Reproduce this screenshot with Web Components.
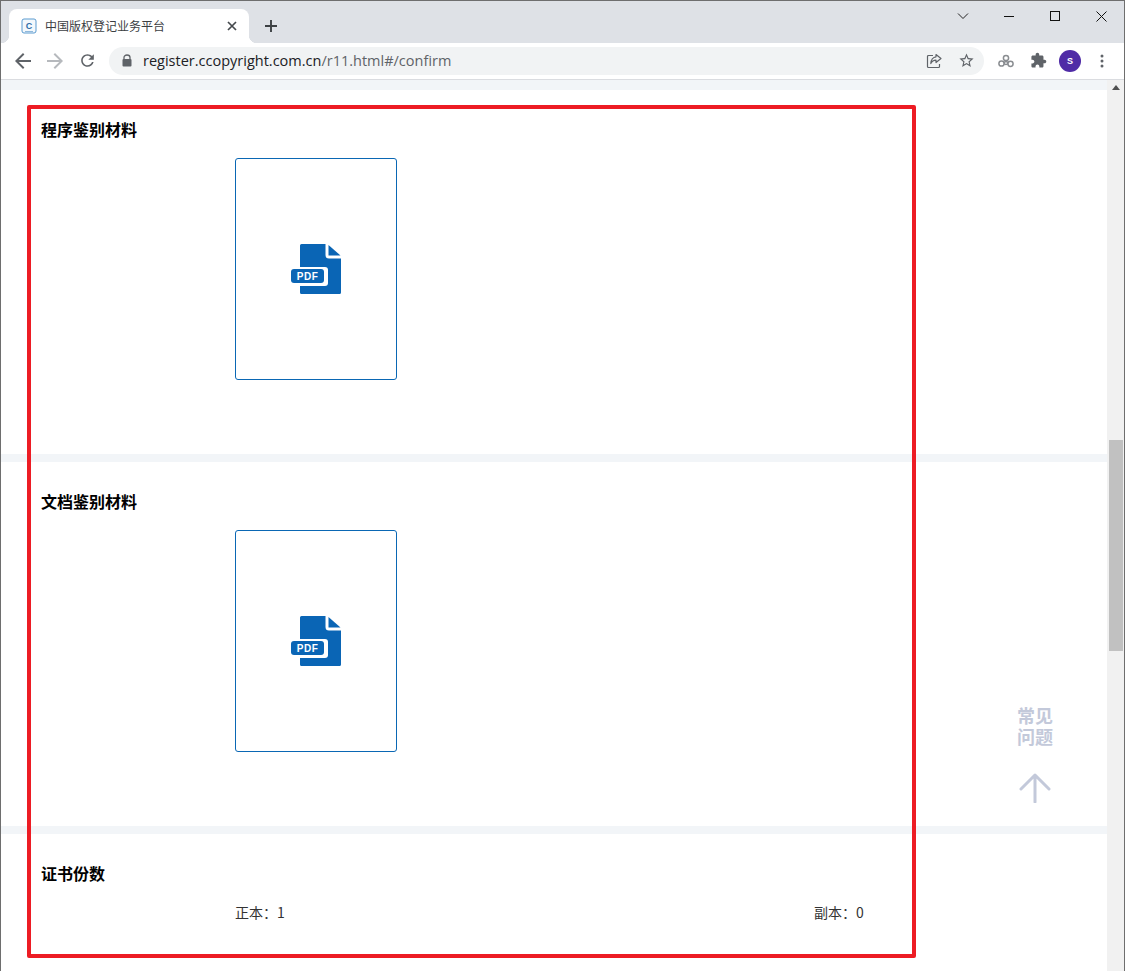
<!DOCTYPE html>
<html lang="zh">
<head>
<meta charset="utf-8">
<title>中国版权登记业务平台</title>
<style>
html,body{margin:0;padding:0;background:#fff;overflow:hidden}
body{font-family:"Noto Sans CJK SC","Noto Sans",sans-serif}
</style>
</head>
<body>
<x-window>
  <x-tabstrip slot="top"></x-tabstrip>
  <x-toolbar slot="top"></x-toolbar>
  <x-section heading="程序鉴别材料"><x-pdf-card></x-pdf-card></x-section>
  <x-section heading="文档鉴别材料"><x-pdf-card></x-pdf-card></x-section>
  <x-section heading="证书份数" last>
    <x-copies></x-copies>
  </x-section>
</x-window>
<script>
function def(name, html, extra){
  const t=document.createElement('template');t.innerHTML=html;
  customElements.define(name,class extends HTMLElement{
    constructor(){super();this.attachShadow({mode:'open'}).appendChild(t.content.cloneNode(true));}
    connectedCallback(){extra&&extra.call(this);}
  });
}
const svg=(w,h,vb,body,attrs='')=>`<svg width="${w}" height="${h}" viewBox="${vb}" ${attrs}>${body}</svg>`;

def('x-window',`<style>
:host{display:flex;flex-direction:column;box-sizing:border-box;width:1125px;height:971px;border:1px solid #6e6e6e;border-bottom:0;overflow:hidden}
.page{flex:1;display:flex;min-height:0}
.content{flex:1;position:relative;min-width:0;display:flex;flex-direction:column;padding-top:10px;background:#fff}
.content::before{content:"";position:absolute;left:0;right:0;top:0;height:10px;background:#f2f5f8}
</style>
<slot name="top"></slot>
<div class="page">
  <div class="content"><slot></slot><x-float-help></x-float-help><x-annotation></x-annotation></div>
  <x-scrollbar></x-scrollbar>
</div>`);

def('x-tabstrip',`<style>
:host{display:flex;height:42px;background:#dee1e6;padding:8px 0 0 8px;box-sizing:border-box;position:relative}
.tab{width:240px;height:34px;background:#fff;border-radius:8px 8px 0 0;display:flex;align-items:center;padding:0 9px 0 12px;box-sizing:border-box;position:relative;font:12px/16px "Noto Sans CJK SC",sans-serif;color:#3c4043}
.tab::before,.tab::after{content:"";position:absolute;bottom:0;width:8px;height:8px}
.tab::before{left:-8px;background:radial-gradient(circle at 0 0,transparent 8px,#fff 8.5px)}
.tab::after{right:-8px;background:radial-gradient(circle at 100% 0,transparent 8px,#fff 8.5px)}
.fav{width:16px;height:16px;margin-right:8px;flex:none}
.name{flex:1;white-space:nowrap}
.x{flex:none;display:flex}
.new{margin:3px 0 0 8px;width:28px;height:28px;display:flex;align-items:center;justify-content:center}
.sp{flex:1}
.ctl{width:46px;height:30px;margin-top:-8px;display:flex;align-items:center;justify-content:center}
</style>
<div class="tab">
  ${svg(16,16,'0 0 16 16','<rect x="1" y="1" width="14" height="14" rx="2" fill="#f3f8fc" stroke="#5b9bd0"/><text x="8" y="11" text-anchor="middle" font-family="Liberation Sans" font-weight="700" font-size="9" fill="#2c6da8">C</text><rect x="4" y="13" width="8" height="1" fill="#8fb9dc"/>','class="fav"')}
  <span class="name">中国版权登记业务平台</span>
  <span class="x">${svg(16,16,'0 0 16 16','<path d="M4 4l8 8M12 4l-8 8" stroke="#45494d" stroke-width="1.7" fill="none"/>')}</span>
</div>
<div class="new">${svg(14,14,'0 0 14 14','<path d="M7 1v12M1 7h12" stroke="#3c4043" stroke-width="1.9" fill="none"/>')}</div>
<div class="sp"></div>
<div class="ctl">${svg(12,8,'0 0 12 8','<path d="M1 1.5l5 5 5-5" stroke="#222" stroke-width="1" fill="none"/>')}</div>
<div class="ctl">${svg(10,10,'0 0 10 10','<path d="M0 5.5h10" stroke="#111" stroke-width="1" fill="none"/>')}</div>
<div class="ctl">${svg(10,10,'0 0 10 10','<rect x=".5" y=".5" width="9" height="9" stroke="#111" fill="none"/>')}</div>
<div class="ctl">${svg(11,11,'0 0 11 11','<path d="M.5.5l10 10M10.5.5l-10 10" stroke="#111" stroke-width="1" fill="none"/>')}</div>`);

const btn=s=>`<div class="b">${s}</div>`;
def('x-toolbar',`<style>
:host{display:flex;align-items:center;height:37px;box-sizing:border-box;background:#fff;border-bottom:1px solid #dadce0;padding:0 6px 1px 6px}
.b{width:32px;height:32px;display:flex;align-items:center;justify-content:center;flex:none}
.omni{flex:1;height:28px;margin:0 6px;border-radius:14px;background:#f1f3f4;display:flex;align-items:center;padding:0 2px 0 12px;min-width:0}
.lock{display:flex;margin-right:10px}
.url{flex:1;font:14.5px/20px "Open Sans","Noto Sans",sans-serif;color:#5f6368;white-space:nowrap}
.url b{font-weight:400;color:#202124}
.av{width:22px;height:22px;border-radius:50%;background:#4f2ba6;color:#fff;font:700 9px/22px "Liberation Sans",sans-serif;text-align:center}
.omni .b{width:32px}
</style>
${btn(svg(16,16,'0 0 16 16','<path d="M16 7H3.8l5.6-5.6L8 0 0 8l8 8 1.4-1.4L3.8 9H16z" fill="#5f6368"/>'))}
${btn(svg(16,16,'0 0 16 16','<path d="M0 7h12.2L6.6 1.4 8 0l8 8-8 8-1.4-1.4L12.2 9H0z" fill="#b6b9bd"/>'))}
${btn(svg(19,19,'0 0 24 24','<path d="M17.65 6.35C16.2 4.9 14.21 4 12 4c-4.42 0-7.99 3.58-7.99 8s3.57 8 7.99 8c3.73 0 6.84-2.55 7.73-6h-2.08c-.82 2.33-3.04 4-5.65 4-3.31 0-6-2.69-6-6s2.69-6 6-6c1.66 0 3.14.69 4.22 1.78L13 11h7V4l-2.35 2.35z" fill="#5f6368"/>'))}
<div class="omni">
  <span class="lock">${svg(12,13,'0 0 12 13','<path d="M3 5.5V3.6C3 2 4.3 1 6 1s3 1 3 2.6v1.9" stroke="#5f6368" stroke-width="1.3" fill="none"/><rect x="1.5" y="5" width="9" height="7.5" rx="1" fill="#5f6368"/>')}</span>
  <span class="url"><b>register.ccopyright.com.cn</b>/r11.html#/confirm</span>
  ${btn(svg(16,16,'0 0 16 16','<path d="M7 2.5H2.5a1 1 0 0 0-1 1v10a1 1 0 0 0 1 1h10a1 1 0 0 0 1-1V11" stroke="#5f6368" stroke-width="1.2" fill="none"/><path d="M10 1.5l5 4-5 4V7.2C7.5 7.2 6 8 4.8 10.5 5 7 7 4 10 3.8z" stroke="#5f6368" stroke-width="1.2" fill="none" stroke-linejoin="round"/>'))}
  ${btn(svg(17,17,'0 0 24 24','<path d="M22 9.24l-7.19-.62L12 2 9.19 8.63 2 9.24l5.46 4.73L5.82 21 12 17.27 18.18 21l-1.63-7.03L22 9.24zM12 15.4l-3.76 2.27 1-4.28-3.32-2.88 4.38-.38L12 6.1l1.71 4.04 4.38.38-3.32 2.88 1 4.28L12 15.4z" fill="#5f6368"/>'))}
</div>
${btn(svg(16,14,'0 0 16 14','<g fill="none" stroke="#8a8d91" stroke-width="1.5"><circle cx="3.5" cy="9.5" r="2.6"/><circle cx="12.5" cy="9.8" r="2.6"/><circle cx="8" cy="4" r="2.6"/><circle cx="8" cy="9" r="1.6"/></g>'))}
${btn(svg(17,17,'0 0 24 24','<path d="M20.5 11H19V7c0-1.1-.9-2-2-2h-4V3.5C13 2.12 11.88 1 10.5 1S8 2.12 8 3.5V5H4c-1.1 0-1.99.9-1.99 2v3.8H3.5c1.49 0 2.7 1.21 2.7 2.7s-1.21 2.7-2.7 2.7H2V20c0 1.1.9 2 2 2h3.8v-1.5c0-1.49 1.21-2.7 2.7-2.7 1.49 0 2.7 1.21 2.7 2.7V22H17c1.1 0 2-.9 2-2v-4h1.5c1.38 0 2.5-1.12 2.5-2.5S21.88 11 20.5 11z" fill="#5f6368"/>'))}
${btn('<div class="av">S</div>')}
${btn(svg(4,14,'0 0 4 14','<circle cx="2" cy="2" r="1.5" fill="#5f6368"/><circle cx="2" cy="7" r="1.5" fill="#5f6368"/><circle cx="2" cy="12" r="1.5" fill="#5f6368"/>'))}`);

def('x-section',`<style>
:host{display:block;box-sizing:border-box;height:364px;padding:28px 0 0 40px;background:#fff}
:host(:not([last])){margin-bottom:8px;position:relative}
:host(:not([last]))::after{content:"";position:absolute;left:0;right:0;bottom:-8px;height:8px;background:#f2f5f8}
:host([last]){flex:1;height:auto}
h2{margin:0 0 18px;font:700 16px/22px "Noto Sans CJK SC",sans-serif;color:#000}
:host([last]) h2{margin-bottom:17px}
.body{padding-left:194px}
</style><h2></h2><div class="body"><slot></slot></div>`,function(){
  this.shadowRoot.querySelector('h2').textContent=this.getAttribute('heading');
});

def('x-pdf-card',`<style>
:host{display:flex;width:162px;height:222px;box-sizing:border-box;border:1px solid #0a67b4;border-radius:3px;align-items:center;justify-content:center;background:#fff}
svg{display:block;margin:-1px 0 0 -1px;overflow:visible}
</style>
${svg(50,50,'0 0 50 50',`<path d="M10.5 0H34.5V11Q34.5 14.5 38 14.5H50V48.5Q50 50 48.5 50H10.5Q9 50 9 48.5V1.5Q9 0 10.5 0Z" fill="#0a65b5"/>
<path d="M37.5 1L49.5 11.5H37.5Z" fill="#0a65b5"/>
<rect x="-1" y="23" width="38" height="19" rx="3" fill="#fff"/>
<rect x="0" y="25" width="33" height="14" rx="3" fill="#0a65b5"/>
<text x="16.5" y="36" text-anchor="middle" font-family="Liberation Sans" font-weight="700" font-size="10" letter-spacing=".5" fill="#fff">PDF</text>`)}`);

def('x-copies',`<style>
:host{display:flex;font:14px/22px "Noto Sans CJK SC","Liberation Sans",sans-serif;color:#333}
.a{width:579px;flex:none}
span{white-space:nowrap}
</style><div class="a"><span>正本：1</span></div><div><span>副本：0</span></div>`);

def('x-scrollbar',`<style>
:host{display:flex;flex-direction:column;align-items:center;width:17px;flex:none;background:#f1f1f1;box-sizing:border-box;padding-top:5px}
svg{display:block}
.thumb{width:14px;height:211px;background:#c1c1c1;margin-top:350px}
</style>
${svg(8,5,'0 0 8 5','<path d="M0 5L4 0l4 5z" fill="#505050"/>')}
<div class="thumb"></div>`);

def('x-float-help',`<style>
:host{position:absolute;left:1006px;top:625px;width:56px;display:flex;flex-direction:column;align-items:center;font:700 18px/21px "Noto Sans CJK SC",sans-serif;color:#c3c9da;text-align:center}
svg{display:block;margin-top:26px}
</style>
<div>常见<br>问题</div>
${svg(32,30,'0 0 32 30','<path d="M16 29V2M2 16L16 2l14 14" stroke="#c3c9da" stroke-width="3" stroke-linecap="round" stroke-linejoin="round" fill="none"/>')}`);

def('x-annotation',`<style>
:host{position:absolute;left:26px;top:25px;width:889px;height:853px;box-sizing:border-box;border:4px solid #ed1c24;border-radius:2px;pointer-events:none}
</style>`);

def('x-placeholder','');
</script>
</body>
</html>
